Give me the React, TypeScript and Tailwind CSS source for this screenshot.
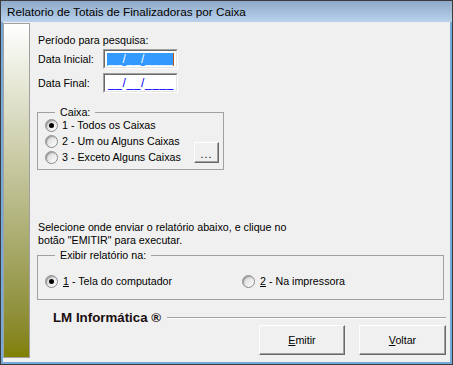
import React from 'react'

function Radio({ checked }: { checked?: boolean }) {
    return (
        <span className="w-[13px] h-[13px] rounded-full border border-[#8d8d8d] bg-gradient-to-br from-[#d4d4d4] to-white flex items-center justify-center shrink-0 shadow-[inset_1px_1px_1px_#9a9a9a]">
            {checked && <span className="w-[5px] h-[5px] rounded-full bg-black" />}
        </span>
    )
}

function ClassicButton({ children, className }: { children: React.ReactNode; className?: string }) {
    return (
        <button
            className={
                'bg-[#f0f0f0] border border-t-white border-l-white border-r-[#696969] border-b-[#696969] shadow-[inset_-1px_-1px_0_#a0a0a0] flex items-center justify-center text-black ' +
                (className ?? '')
            }
        >
            {children}
        </button>
    )
}

function DateBox({ selected }: { selected?: boolean }) {
    return (
        <div className="w-[75px] h-[20px] border border-t-[#a0a0a0] border-l-[#a0a0a0] border-r-white border-b-white">
            <div className="w-full h-full border border-t-[#696969] border-l-[#696969] border-r-[#e3e3e3] border-b-[#e3e3e3] bg-white p-[2px]">
                {selected ? (
                    <div className="h-[13px] w-[67px] bg-[#3399ff] text-white text-[12px] leading-[13px] tracking-[0.6px] pl-[1px] overflow-hidden border-r border-r-[#b05a20]">
                        __/__/____
                    </div>
                ) : (
                    <div className="h-[13px] text-[#0000ff] text-[12px] leading-[13px] tracking-[0.6px] pl-[1px] overflow-hidden">
                        __/__/____
                    </div>
                )}
            </div>
        </div>
    )
}

export default function App() {
    return (
        <div className="w-[453px] h-[365px] bg-[#3c3c3c] p-px font-['Liberation_Sans',sans-serif] text-[10.7px] text-black">
            <div className="w-full h-full flex flex-col bg-[#74a9da]">
                {/* title bar */}
                <div className="h-[21px] bg-gradient-to-b from-[#8eaac8] to-[#bad2ec] flex items-center pl-[6px] text-[11.7px] text-black">
                    Relatorio de Totais de Finalizadoras por Caixa
                </div>

                <div className="flex-1 mx-[2px] mb-[2px] bg-[#f0f0f0] flex">
                    {/* side strip */}
                    <div className="w-[27px] mt-px mb-[4px] border border-[#a0a0a0] bg-gradient-to-b from-white to-[#808000]" />

                    <div className="flex-1 flex flex-col pl-[7px]">
                        <p className="mt-[12px] ml-[1px] leading-[13px]">Período para pesquisa:</p>

                        <div className="mt-[2px] flex items-center">
                            <span className="w-[65px] ml-[1px] leading-[13px]">Data Inicial:</span>
                            <DateBox selected />
                        </div>
                        <div className="mt-[4px] flex items-center">
                            <span className="w-[65px] ml-[1px] leading-[13px]">Data Final:</span>
                            <DateBox />
                        </div>

                        <fieldset className="mt-[14px] w-[187px] border border-[#a0a0a0] pl-[7px] pr-[4px] pb-[4px] flex">
                            <legend className="ml-[10px] px-[5px] leading-[10px]">Caixa:</legend>
                            <div className="flex flex-1 items-end justify-between">
                                <div className="flex flex-col">
                                    <label className="h-[16px] flex items-center gap-[4px]">
                                        <Radio checked />
                                        <span>1 - Todos os Caixas</span>
                                    </label>
                                    <label className="h-[16px] flex items-center gap-[4px]">
                                        <Radio />
                                        <span>2 - Um ou Alguns Caixas</span>
                                    </label>
                                    <label className="h-[16px] flex items-center gap-[4px]">
                                        <Radio />
                                        <span>3 - Exceto Alguns Caixas</span>
                                    </label>
                                </div>
                                <ClassicButton className="w-[25px] h-[21px] mb-[2px] leading-none pt-[3px] tracking-[1px]">...</ClassicButton>
                            </div>
                        </fieldset>

                        <div className="mt-[51px] ml-[1px] leading-[13px]">
                            <p>Selecione onde enviar o relatório abaixo, e clique no</p>
                            <p>botão "EMITIR" para executar.</p>
                        </div>

                        <fieldset className="mt-[3px] w-[407px] border border-[#a0a0a0] pl-[7px] pb-[10px]">
                            <legend className="ml-[10px] px-[5px] leading-[10px]">Exibir relatório na:</legend>
                            <div className="mt-[13px] h-[16px] flex items-center">
                                <label className="w-[197px] flex items-center gap-[5px]">
                                    <Radio checked />
                                    <span>
                                        <span className="underline">1</span> - Tela do computador
                                    </span>
                                </label>
                                <label className="flex items-center gap-[5px]">
                                    <Radio />
                                    <span>
                                        <span className="underline">2</span> - Na impressora
                                    </span>
                                </label>
                            </div>
                        </fieldset>

                        <div className="mt-[11px] ml-[16px] mr-[4px] h-[14px] flex items-center gap-[6px]">
                            <span className="font-bold text-[13.3px] text-[#1a0e0e] leading-[14px]">LM Informática ®</span>
                            <span className="flex-1 h-[2px] border-t border-t-[#a0a0a0] border-b border-b-white" />
                        </div>

                        <div className="mr-[4px] flex justify-end gap-[14px]">
                            <ClassicButton className="w-[86px] h-[30px]">
                                <span>
                                    <span className="underline">E</span>mitir
                                </span>
                            </ClassicButton>
                            <ClassicButton className="w-[87px] h-[30px]">
                                <span>
                                    <span className="underline">V</span>oltar
                                </span>
                            </ClassicButton>
                        </div>
                    </div>
                </div>
            </div>
        </div>
    )
}
